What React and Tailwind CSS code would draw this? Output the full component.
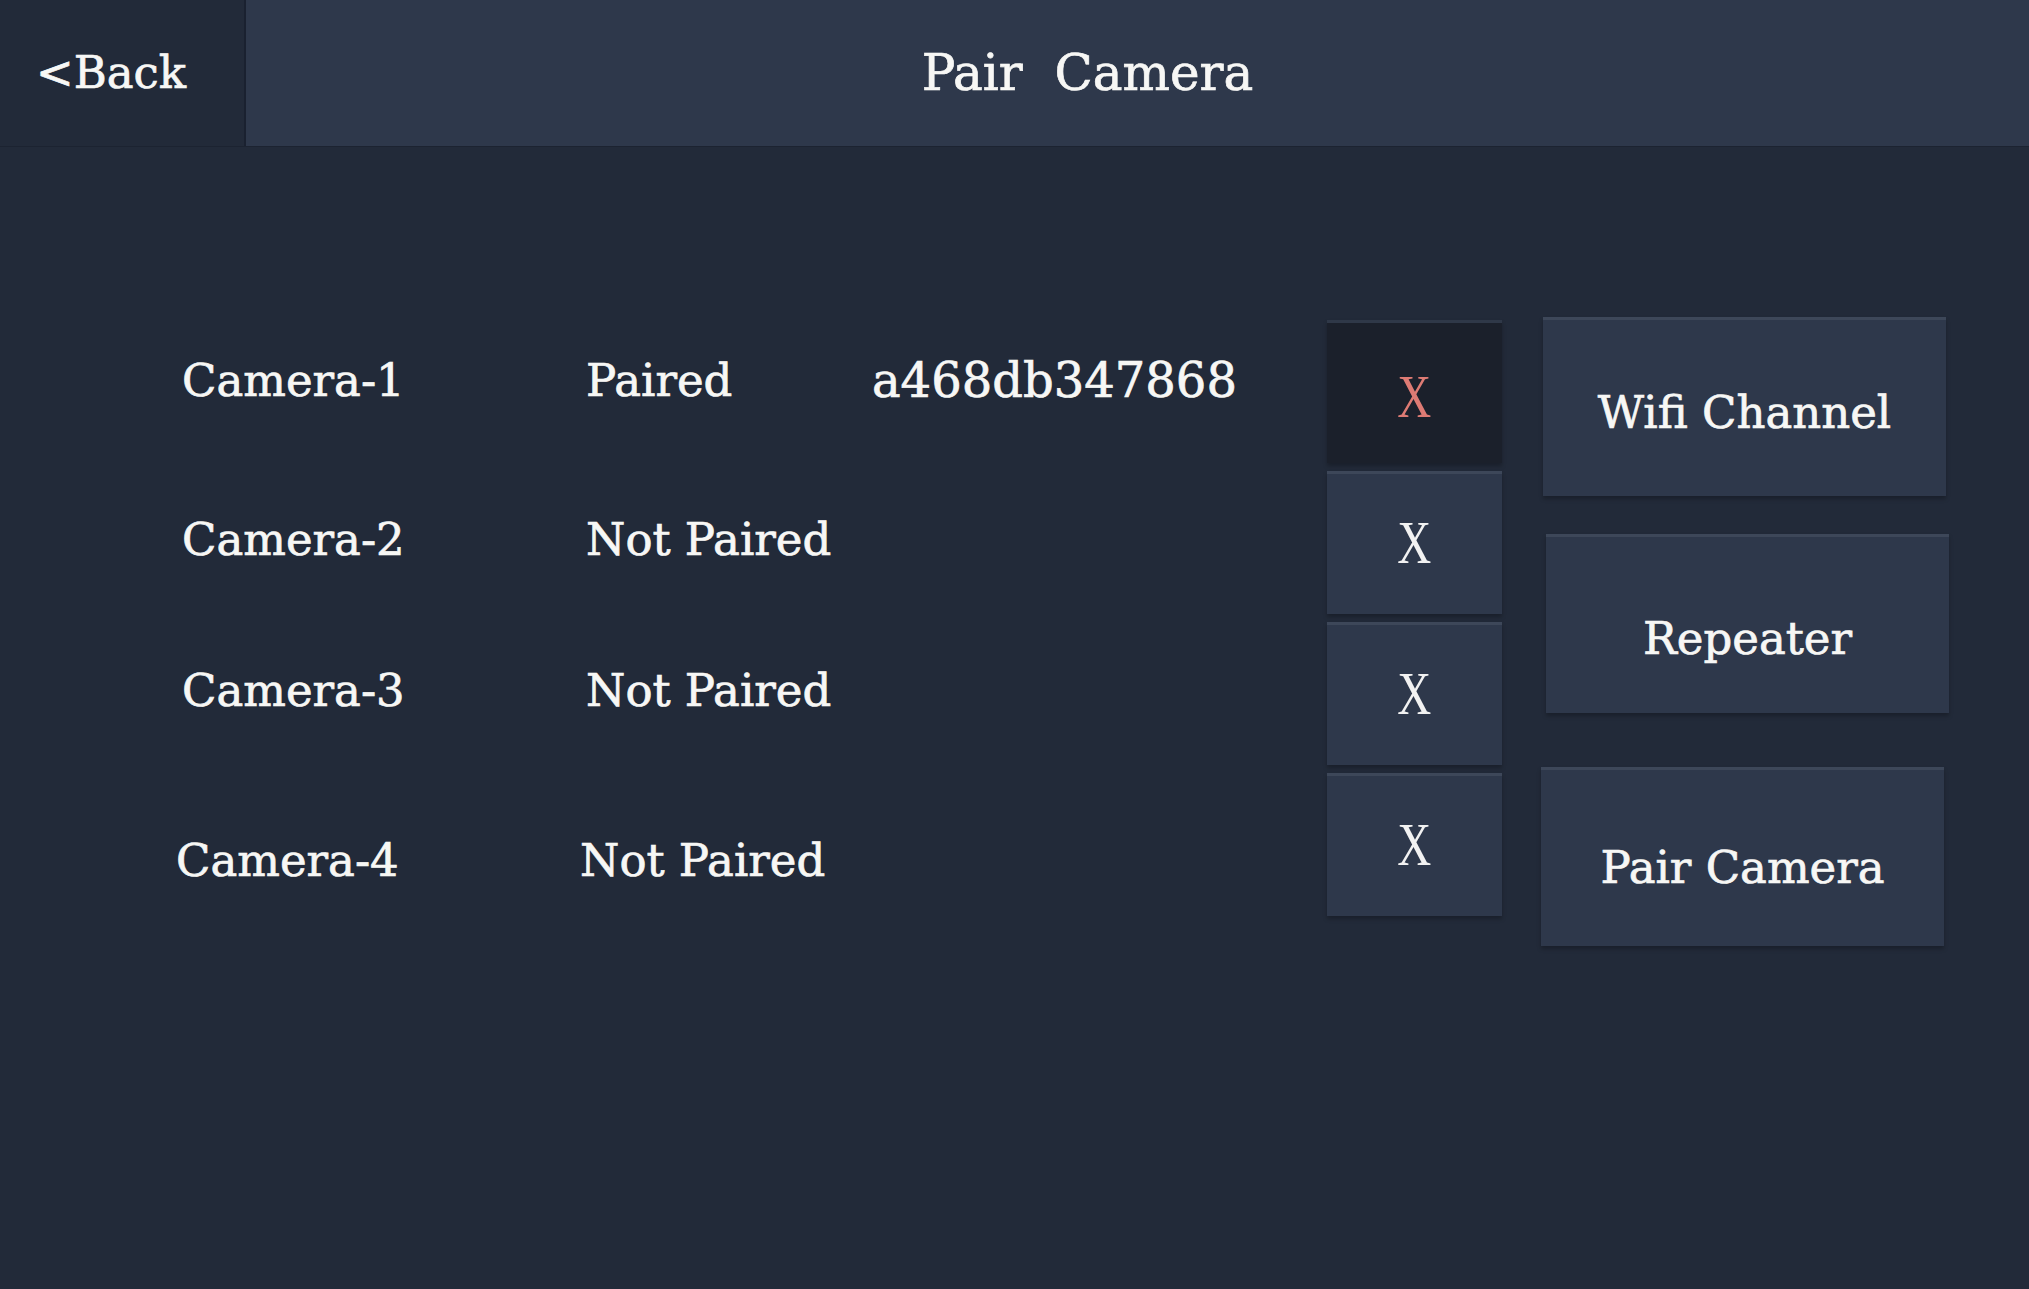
import React from "react";

const cameras = [
  { name: "Camera-1", status: "Paired", id: "a468db347868", row: "mt-[350px]", shift: "" },
  { name: "Camera-2", status: "Not Paired", id: "", row: "mt-[99px]", shift: "" },
  { name: "Camera-3", status: "Not Paired", id: "", row: "mt-[91px]", shift: "" },
  { name: "Camera-4", status: "Not Paired", id: "", row: "mt-[110px]", shift: "-ml-[6px]" },
];

function XButton({ active }) {
  return (
    <button
      className={`h-[143px] w-full flex items-center justify-center border-t-[3px] shadow-[0_3px_4px_rgba(0,0,0,0.25)] ${
        active
          ? "bg-[#1b202b] border-[#2f3848] text-[#de7b74] pt-[6px]"
          : "bg-[#2e384b] border-[#3d4759] text-[#f2f2f2] pb-[4px]"
      }`}
    >
      <span className="font-['Liberation_Serif',serif] text-[62px] leading-none font-light scale-x-[0.76]">X</span>
    </button>
  );
}

function ActionButton({ label, extra }) {
  return (
    <button
      className={`h-[179px] w-[403px] flex items-center justify-center bg-[#2e384b] border-t-[3px] border-[#3d4759] shadow-[0_3px_4px_rgba(0,0,0,0.25)] text-[#f7f7f5] text-[45px] [-webkit-text-stroke:0.7px_#f7f7f5] ${extra}`}
    >
      {label}
    </button>
  );
}

export default function App() {
  return (
    <div className="w-[2029px] h-[1289px] bg-[#222a39] text-[#f7f7f5] font-['DejaVu_Serif',serif] overflow-hidden">
      {/* Header */}
      <header className="flex h-[147px] border-b border-[#1c2331] [-webkit-text-stroke:0.7px_#f7f7f5]">
        <div className="w-[246px] h-full flex items-center pl-[36px] bg-[#222a39] border-r-2 border-[#1a2130] text-[45px]">
          &lt;Back
        </div>
        <div className="flex-1 h-full flex items-center justify-center pr-[100px] bg-[#2e384b] text-[50px]">
          Pair&nbsp; Camera
        </div>
      </header>

      {/* Body */}
      <main className="flex pl-[182px] pr-[80px]">
        {/* Camera list */}
        <div className="flex-1 flex flex-col -mt-[147px] text-[45px] leading-none [-webkit-text-stroke:0.7px_#f7f7f5]">
          {cameras.map((c) => (
            <div key={c.name} className={`flex items-center h-[60px] ${c.row} ${c.shift}`}>
              <span className="w-[404px]">{c.name}</span>
              <span className="w-[286px]">{c.status}</span>
              <span className="text-[48px]">{c.id}</span>
            </div>
          ))}
        </div>

        {/* Remove buttons */}
        <div className="w-[175px] flex flex-col gap-[8px] mt-[173px]">
          <XButton active />
          <XButton />
          <XButton />
          <XButton />
        </div>

        {/* Actions */}
        <div className="ml-[41px] flex flex-col mt-[170px]">
          <ActionButton label="Wifi Channel" extra="pt-[10px]" />
          <ActionButton label="Repeater" extra="mt-[38px] ml-[3px] pt-[28px]" />
          <ActionButton label="Pair Camera" extra="mt-[54px] -ml-[2px] pt-[20px]" />
        </div>
      </main>
    </div>
  );
}
